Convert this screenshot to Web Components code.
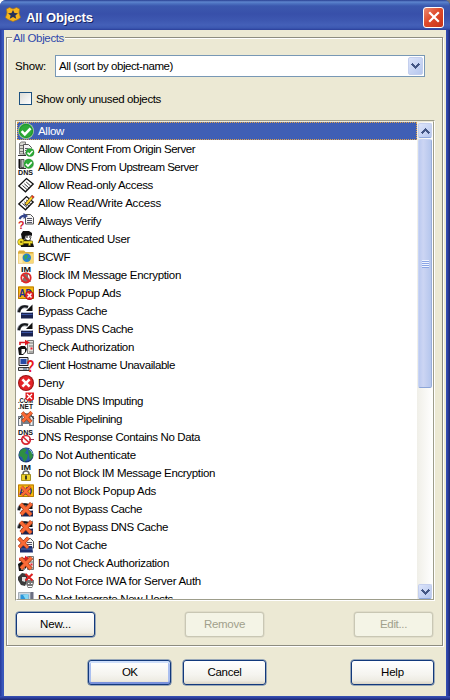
<!DOCTYPE html>
<html lang="en">
<head>
<meta charset="utf-8">
<title>All Objects</title>
<style>
html,body{margin:0;width:450px;height:700px;overflow:hidden;background:#ece9d4;font:11.5px "Liberation Sans",Arial,sans-serif;color:#000}
</style>
</head>
<body>
<object-dialog></object-dialog>
<script>
/* Text run spaced to fill exactly w pixels */
class FitText extends HTMLElement{
  connectedCallback(){
    const r=this.attachShadow({mode:'open'});
    r.innerHTML='<style>:host{display:inline-block;white-space:pre}span{display:inline-block}</style><span><slot></slot></span>';
    const w=+this.getAttribute('w'),s=r.querySelector('span');
    if(w){
      this.style.width=w+'px';
      const n=this.textContent.length;
      s.style.letterSpacing=((w-s.getBoundingClientRect().width)/n).toFixed(3)+'px';
    }
  }
}

const check=(x,y,s)=>`<g transform="translate(${x} ${y}) scale(${s/16})"><circle cx="8" cy="8" r="8" fill="#a9c9a4"/><circle cx="8" cy="8" r="7.200" fill="#1f9a2c"/><circle cx="8" cy="8" r="6" fill="#2eaa38"/><path d="M3.600 8.200L6.800 11.400L12.600 5.400" fill="none" stroke="#fff" stroke-width="2.600"/></g>`;
const orangeX=`<path d="M2.500 3L13 14M13.500 2.500L3 13.500" stroke="#9c3a16" stroke-width="4.200"/><path d="M2.500 3L13 14M13.500 2.500L3 13.500" stroke="#fa6a36" stroke-width="3"/>`;
const redX=(x,y,s)=>`<g transform="translate(${x} ${y}) scale(${s/16})"><circle cx="8" cy="8" r="8" fill="#9c1414"/><circle cx="8" cy="8" r="6.900" fill="#e42428"/><path d="M4.400 4.400l7.200 7.200M11.600 4.400l-7.200 7.200" stroke="#fff" stroke-width="2.600"/></g>`;
const page=(x,y)=>`<g transform="translate(${x} ${y})"><path d="M.5.5h5l3 3v6.500h-8z" fill="#f4f4f4" stroke="#555"/><path d="M2 4.500h5M2 6.500h5M2 8.500h5" stroke="#556"/></g>`;
/* Miniature captions inside icons */
const cap=(t,x,y,sz,c='#111',w=15,b='bold')=>`<text x="${x}" y="${y}" font-family="Liberation Sans, sans-serif" font-weight="${b}" font-size="${sz}" fill="${c}" textLength="${w}" lengthAdjust="spacingAndGlyphs">${t}</text>`;
const tag=`<path d="M.8 9L8.500 1.500L15.200 7L7.500 14.800z" fill="#fff" stroke="#111" stroke-width="1.300"/><path d="M4.500 8.500l4.500 4M6.300 6.800l4.500 4M8.200 5l4.500 4" stroke="#222" stroke-width=".9"/>`;
const bypass=`<path d="M.5 9.500C1 4.500 5 2.500 10 4.200" fill="none" stroke="#8d9299" stroke-width="3.400"/><path d="M1 9.200C1.600 4.200 5.500 2 10 4" fill="none" stroke="#16181c" stroke-width="2.200"/><path d="M14.500 1.500V8H8z" fill="#111"/><path d="M3 10l1.500-1h9.500l1 1v5.500H3z" fill="#1a2350"/><path d="M3.500 10l1.200-1h9l1 1z" fill="#b4bfd8"/><path d="M3.500 11.500h11" stroke="#3a54a4"/>`;
const auth=`<path d="M9.500 1.500h6v13h-6z" fill="#e2e2dc" stroke="#777"/><path d="M11 4h4M11 7h4M11 13h4" stroke="#777"/><path d="M0 9l3-2 4 0 2 3-1 3-3 3H1z" fill="#111"/><path d="M3.500 10h3.500v3l-2 2H3.500z" fill="#fff"/><path d="M2 6V3.500h6" fill="none" stroke="#d41820" stroke-width="1.600"/><path d="M7 .8l5 2.700-5 2.900z" fill="#e01820"/><path d="M12.500 8.500h2v2h-2z" fill="#e23"/>`;
const popup=`<path d="M0 1.500h16v12.500H0z" fill="#f6b90e"/><path d="M.5 2h15v11.500H.500z" fill="none" stroke="#b87c08"/>`+cap('AD',1,11.500,11,'#1b2c99',13);
const ICONS={
 allow:check(0,0,16),
 origin:`<path d="M1.500 2.500l2-1.500h4v12h-6z" fill="#d8d8d0" stroke="#777"/><path d="M2 4.500h5M2 7.500h5M2 10.500h5" stroke="#777"/><path d="M0 14.500h8" stroke="#333"/>`+page(5,3)+check(7.500,7,9),
 dns:`<path d="M1.500 0v9" stroke="#111" stroke-width="2"/><path d="M3 .5h3v8H3z" fill="#bbb" stroke="#555"/><path d="M1 9.500h7" stroke="#333"/>`+check(5.500,-.5,10.500)+cap('DNS',0,16,7.500),
 read:tag,
 write:tag+`<path d="M15.200 1L7.500 10" stroke="#222" stroke-width="3.400"/><path d="M15.200 1L8 9.300" stroke="#ffd028" stroke-width="2.200"/><path d="M13.800 1l1.800 1.500" stroke="#d33" stroke-width="2"/>`,
 verify:page(7,1)+`<path d="M1.500 6q2-4 6-3" fill="none" stroke="#33458c" stroke-width="2"/><path d="M5.500 0l4.500 3-4.500 3z" fill="#33458c"/>`+cap('?',0,16,11,'#d3202a',6.5),
 user:`<path d="M3 3l2-3h6l3 2 0 3-2-1-4 1-2 4-2-1z" fill="#111"/><path d="M7 5l5-1 1 2-1 3-2 1-3-2z" fill="#fff" stroke="#222" stroke-width=".8"/><path d="M8 6h2M11 6h1" stroke="#111"/><path d="M2 9l5-.5 3 1 3 0 2 3 1 3.500H3z" fill="#111"/><circle cx="3" cy="11" r="2" fill="none" stroke="#6d6000" stroke-width="3"/><circle cx="3" cy="11" r="2" fill="none" stroke="#f2de2c" stroke-width="2"/><path d="M5 10h9.500v2.500h-2v2h-2v-2H5z" fill="#f2de2c" stroke="#6d6000" stroke-width=".6"/>`,
 folder:`<path d="M0 3l1-1.500h5l1.500 1.500h8V14.500H0z" fill="#dcae3e"/><path d="M.5 4.500h15v9.500H.5z" fill="#f8d878"/><path d="M.5 5h4v9h-4z" fill="#fceaaf"/><circle cx="8.800" cy="8.800" r="4.200" fill="#2680d2"/><path d="M7 6h3l-1 3-2 2-1-3zM10 9h2l-1 3z" fill="#39a65a"/>`,
 im:cap('IM',3,5,7,'#111',10)+`<path d="M6 6h4v4l3 5H3l3-5z" fill="#8a6a68"/><circle cx="8" cy="10.800" r="4.700" fill="none" stroke="#e02828" stroke-width="1.800"/><path d="M4.500 7.500l7 7" stroke="#e02828" stroke-width="1.800"/>`,
 popup:popup+redX(7,6,9),
 bypass,
 auth,
 client:`<path d="M1 .5h9v8H1z" fill="#dde" stroke="#222"/><path d="M2.500 2h6v5h-6z" fill="#284ba4"/><path d="M0.500 10.500h10.500v3H.5z" fill="#d8d8d8" stroke="#222" stroke-width=".9"/><path d="M5 12h4" stroke="#357"/>`+cap('?',8.500,15,16,'#e8181c',8),
 deny:redX(0,0,16),
 imput:cap('.COM',0,10,7)+cap('.NET',0,16,7)+`<path d="M7.500-.5H16v7l-4.200 2-4.300-2z" fill="#e01c20"/><path d="M9 1l5 5M14 1l-5 5" stroke="#fff" stroke-width="1.300"/>`,
 pipe:`<path d="M0 5h5v10H0zM11 5h5v10h-5zM4 8h8v5H4z" fill="#77808a"/><path d="M1 6h2v8H1zM12.500 6h2v8h-2z" fill="#eee"/><path d="M1 8l4-5h7l4 5" fill="none" stroke="#222"/><g transform="translate(2 -1) scale(.86)">${orangeX}</g>`,
 nodata:cap('DNS',0,5.500,7.500)+`<circle cx="8" cy="10.800" r="4.300" fill="#fff" stroke="#d92731" stroke-width="1.700"/><path d="M4.500 7.500l7 6.500" stroke="#d92731" stroke-width="1.700"/><path d="M0 10.500h5M11 10.500h5" stroke="#a03050"/>`,
 globe:`<circle cx="8" cy="8" r="7.600" fill="#1b3b78"/><circle cx="7.700" cy="7.500" r="6.600" fill="#2a5cb0"/><path d="M2 4l4-3 3 2-2 3 3 2-1 4-3 3-2-5-3-1zM10 3l4 2 1 5-3 3-1-4z" fill="#2f8f42"/><path d="M11 2q3 1.500 3.500 5" stroke="#8cc7e4" fill="none"/>`,
 imlock:cap('IM',3,5,7,'#111',10)+`<path d="M5 10V9q0-3 3-3t3 3v1" fill="none" stroke="#666" stroke-width="1.500"/><path d="M3.500 9.500h9v6h-9z" fill="#ecd02a" stroke="#8b7608" stroke-width=".8"/><path d="M8 10.500v4" stroke="#222" stroke-width="1.700"/>`,
 nopopup:popup+`<g transform="translate(1.500 1.500) scale(.8)">${orangeX}</g>`,
 nobypass:bypass+orangeX,
 nocache:page(7,1)+`<path d="M2 11l2-2h10l1 6.500H2z" fill="#1c2f72"/><path d="M3 12h11" stroke="#536fae"/><g transform="translate(-1.500 -1.500) scale(.88)">${orangeX}</g>`,
 noauth:auth+orangeX,
 iwa:`<path d="M0 4l4-4 5 1 1 6-3 6-4-1-3-5z" fill="#3b3b3b"/><path d="M4 4h4l-1 5-3-1z" fill="#ddd"/><path d="M8.500 7h7.500v3l-2 5h-4l-2-4z" fill="#777"/><path d="M10 10.500h1.500M13 10.500h1.500M10 13.500h4" stroke="#fff"/><path d="M7.500 1l7 6.500M14.500 1l-7 6.500" stroke="#db2020" stroke-width="2"/>`,
 hosts:`<path d="M.5 1.500h12v11H.5z" fill="#cdd6de" stroke="#a5adb5"/><path d="M2.500 3.500h8v7h-8z" fill="#2b96da"/><path d="M5 4l3 5h2V3z" fill="#82d7f4"/><path d="M12.500 1h3v13h-3z" fill="#6c6f82"/>`
};
class ObjectIcon extends HTMLElement{
  connectedCallback(){
    this.attachShadow({mode:'open'}).innerHTML=`<style>:host{display:block;width:16px;height:16px;flex:none}svg{display:block;overflow:visible}</style><svg width="16" height="16" viewBox="0 0 16 16">${ICONS[this.getAttribute('name')]}</svg>`;
  }
}
class ObjectRow extends HTMLElement{
  connectedCallback(){
    this.attachShadow({mode:'open'}).innerHTML=`<style>:host{display:flex;align-items:center;box-sizing:border-box;height:18px;padding-left:1px;gap:4px;line-height:16px}
    :host([selected]){background:#3f5fb5;color:#fff;outline:1px dotted #e0a24a;outline-offset:-1px}</style>
    <object-icon name="${this.getAttribute('icon')}"></object-icon><slot></slot>`;
  }
}
const chevron=up=>`<svg width="9" height="6" viewBox="0 0 9 6" shape-rendering="crispEdges"><path ${up?'transform="matrix(1 0 0 -1 0 6)"':''} d="M0 1h1V0h1v1h1v1h1v1h1V2h1V1h1V0h1v1h1v1H8v1H7v1H6v1H5v1H4V5H3V4H2V3H1V2H0z" fill="#435684"/></svg>`;
class ArrowButton extends HTMLElement{
  connectedCallback(){
    this.attachShadow({mode:'open'}).innerHTML=`<style>:host{display:flex;align-items:center;justify-content:center;box-sizing:border-box;border:1px solid #c4cfee;border-radius:2px;background:linear-gradient(135deg,#dce4fa,#b6c7ee);flex:none}</style>${chevron(this.hasAttribute('up'))}`;
  }
}
class XpScrollbar extends HTMLElement{
  connectedCallback(){
    this.attachShadow({mode:'open'}).innerHTML=`<style>:host{display:flex;flex-direction:column;width:16px;background:linear-gradient(90deg,#f0efe8,#fff)}
    arrow-button{height:15px;width:14px;margin:1px 1px 0;border-bottom-color:#8fa9dd}
    .thumb{box-sizing:border-box;height:249px;margin:1px 1px 0;background:linear-gradient(90deg,#bccaf0,#ccd5f3 35%,#b5c6ed);border:1px solid #c9d5f4;border-right-color:#98aed9;border-bottom-color:#8da6d8;border-radius:2px;display:flex;align-items:center;justify-content:center}
    .grip{width:7px;height:8px;background:repeating-linear-gradient(#f1f5ff 0 1px,#8ba5e5 1px 2px)}
    .space{flex:1}</style>
    <arrow-button up></arrow-button><div class="thumb"><div class="grip"></div></div><div class="space"></div><arrow-button></arrow-button>`;
  }
}
class ObjectList extends HTMLElement{
  connectedCallback(){
    this.attachShadow({mode:'open'}).innerHTML=`<style>:host{display:flex;box-sizing:border-box;height:481px;width:420px;border:1px solid;border-color:#9d9d8b #fff #fff #9d9d8b;background:#fff}
    .in{display:flex;flex:1;border:1px solid;border-color:#ece9d8 #9d9d8b #9d9d8b #fff;min-width:0}
    .rows{flex:1;overflow:hidden}</style><div class="in"><div class="rows"><slot></slot></div><xp-scrollbar></xp-scrollbar></div>`;
  }
}
class XpButton extends HTMLElement{
  connectedCallback(){
    this.attachShadow({mode:'open'}).innerHTML=`<style>:host{display:flex;align-items:center;justify-content:center;box-sizing:border-box;width:79px;height:25px;padding-bottom:1px;border:1px solid #12397c;border-radius:3px;background:linear-gradient(#fff,#f5f4ef 60%,#eeece3 85%,#d9d4c6);box-shadow:0 0 0 .5px #47689c}
    :host([wide]){width:83px}
    :host([default]){box-shadow:inset 0 2px #cfdffa,inset 0 -2px #7992dc,inset 2px 0 #aabff0,inset -2px 0 #aabff0,0 0 0 .5px #47689c}
    :host([disabled]){color:#a1a08c;border-color:#c9c7b4;background:#f4f4e6;box-shadow:0 0 0 .5px #d4d1bf}</style><slot></slot>`;
  }
}
class XpCombo extends HTMLElement{
  connectedCallback(){
    this.attachShadow({mode:'open'}).innerHTML=`<style>:host{display:flex;align-items:center;justify-content:space-between;box-sizing:border-box;width:370px;height:22px;border:1px solid #7898b5;background:#fff;padding:0 1px 0 3px}
    arrow-button{width:15px;height:18px}</style><slot></slot><arrow-button></arrow-button>`;
  }
}
class XpCheck extends HTMLElement{
  connectedCallback(){
    this.attachShadow({mode:'open'}).innerHTML=`<style>:host{display:flex;align-items:center;gap:4px;height:13px}
    i{box-sizing:border-box;width:13px;height:13px;border:1px solid #1c5180;background:linear-gradient(135deg,#dcdcd7,#fff)}</style><i></i><slot></slot>`;
  }
}
class XpGroup extends HTMLElement{
  connectedCallback(){
    this.attachShadow({mode:'open'}).innerHTML=`<style>:host{display:block;box-sizing:border-box;width:437px;height:609px;border:1px solid #8d8c80;box-shadow:1px 1px #fff,inset 1px 1px #fff}
    .legend{display:block;width:fit-content;height:14px;line-height:14px;margin:-7px 0 0 5px;padding:0 1px;background:#ece9d4;color:#2f48ab}</style>
    <div class="legend"><slot name="legend"></slot></div><slot></slot>`;
  }
}
class TitleBar extends HTMLElement{
  connectedCallback(){
    this.attachShadow({mode:'open'}).innerHTML=`<style>:host{display:flex;align-items:center;box-sizing:border-box;height:30px;padding:4px 6px 0 5px;border-radius:6px 6px 0 0;color:#fff;background:linear-gradient(#283f91 0,#5f86cf 2px,#5077c4 3px,#3b58ae 6px,#3850aa 14px,#3d57b0 20px,#4460b8 25px,#3c58b1 28px,#2b3f99)}
    .t{margin-left:5px;font:bold 13px "Liberation Sans",Arial,sans-serif;text-shadow:1px 1px #172363;flex:1}
    .close{display:flex;align-items:center;justify-content:center;box-sizing:border-box;width:21px;height:21px;border:1px solid #fff;border-radius:3px;background:linear-gradient(135deg,#ea8a73,#df4b2c 45%,#c83318)}
    .badge{margin-top:-5px}</style>
    <svg class="badge" width="16" height="16" viewBox="0 0 16 16"><path d="M1.500 2l3-1.500 3.500 1.500 3.500-1.500 3 1.500-.5 4 1.500 4.500-2.500 2-5 2-5-2-2.500-2 1.500-4.500z" fill="#f7b51d" stroke="#a8741d" stroke-width=".7"/><path d="M8 3l1.500 3 3.500.3-2.600 2.200.8 3.200L8 10l-3.200 1.700.8-3.200L3 6.300 6.500 6z" fill="#26315a"/></svg>
    <span class="t"><slot></slot></span>
    <span class="close"><svg width="12" height="12" viewBox="0 0 12 12"><path d="M1.200 1.200l9.600 9.600M10.800 1.200l-9.600 9.600" stroke="#fff" stroke-width="2.200"/></svg></span>`;
  }
}
const OBJECTS=[['allow','Allow',63],['origin','Allow Content From Origin Server',194],['dns','Allow DNS From Upstream Server',197],['read','Allow Read-only Access',152],['write','Allow Read/Write Access',160],['verify','Always Verify',100],['user','Authenticated User',129],['folder','BCWF',69],['im','Block IM Message Encryption',180],['popup','Block Popup Ads',120],['bypass','Bypass Cache',106],['bypass','Bypass DNS Cache',132],['auth','Check Authorization',133],['client','Client Hostname Unavailable',174],['deny','Deny',63],['imput','Disable DNS Imputing',142],['pipe','Disable Pipelining',121],['nodata','DNS Response Contains No Data',199],['globe','Do Not Authenticate',135],['imlock','Do not Block IM Message Encryption',214],['nopopup','Do not Block Popup Ads',155],['nobypass','Do not Bypass Cache',141],['nobypass','Do not Bypass DNS Cache',167],['nocache','Do Not Cache',106],['noauth','Do not Check Authorization',168],['iwa','Do Not Force IWA for Server Auth',200],['hosts','Do Not Integrate New Hosts',172]];
class ObjectDialog extends HTMLElement{
  connectedCallback(){
    this.attachShadow({mode:'open'}).innerHTML=`<style>:host{display:block;width:450px;height:700px;background:linear-gradient(90deg,#fff 225px,#777 225px)}
    .win{display:flex;flex-direction:column;width:450px;height:700px;border-radius:6px 6px 0 0;background:linear-gradient(90deg,#26399b,#3c5cc0 3px,#3651b6 4px,#3651b6 446px,#2b3e9e 448px,#1c276e)}
    .body{box-sizing:border-box;height:666px;margin:0 4px;padding:7px 0 0 2px;background:#ece9d4}
    .foot{height:4px;background:linear-gradient(#3953b6,#2b3d9c 50%,#1c276e)}
    .show{display:flex;align-items:center;gap:9px;height:22px;margin:10px 0 0 8px}
    xp-check{margin:15px 0 0 12px}
    object-list{margin:15px 0 0 8px}
    .acts{display:flex;justify-content:space-between;width:417px;margin:11px 0 0 9px}
    .main{display:flex;margin:14px 0 0 82px;gap:12px}
    .main>:last-child{margin-left:73px}</style>
    <div class="win"><title-bar><fit-text w="67">All Objects</fit-text></title-bar>
    <div class="body"><xp-group><fit-text slot="legend" w="51">All Objects</fit-text>
      <div class="show"><fit-text w="31">Show:</fit-text><xp-combo><fit-text w="114">All (sort by object-name)</fit-text></xp-combo></div>
      <xp-check><fit-text w="125">Show only unused objects</fit-text></xp-check>
      <object-list>${OBJECTS.map(([i,t,r],n)=>`<object-row icon="${i}"${n?'':' selected'}><fit-text w="${r-37}">${t}</fit-text></object-row>`).join('')}</object-list>
      <div class="acts"><xp-button><fit-text w="31">New...</fit-text></xp-button><xp-button disabled><fit-text w="41">Remove</fit-text></xp-button><xp-button disabled><fit-text w="27">Edit...</fit-text></xp-button></div>
    </xp-group>
    <div class="main"><xp-button wide default><fit-text w="15">OK</fit-text></xp-button><xp-button wide><fit-text w="34">Cancel</fit-text></xp-button><xp-button wide><fit-text w="23">Help</fit-text></xp-button></div>
    </div><div class="foot"></div></div>`;
  }
}
Object.entries({'fit-text':FitText,'object-icon':ObjectIcon,'object-row':ObjectRow,'arrow-button':ArrowButton,'xp-scrollbar':XpScrollbar,'object-list':ObjectList,'xp-button':XpButton,'xp-combo':XpCombo,'xp-check':XpCheck,'xp-group':XpGroup,'title-bar':TitleBar,'object-dialog':ObjectDialog}).forEach(([n,c])=>customElements.define(n,c));
</script>
</body>
</html>
